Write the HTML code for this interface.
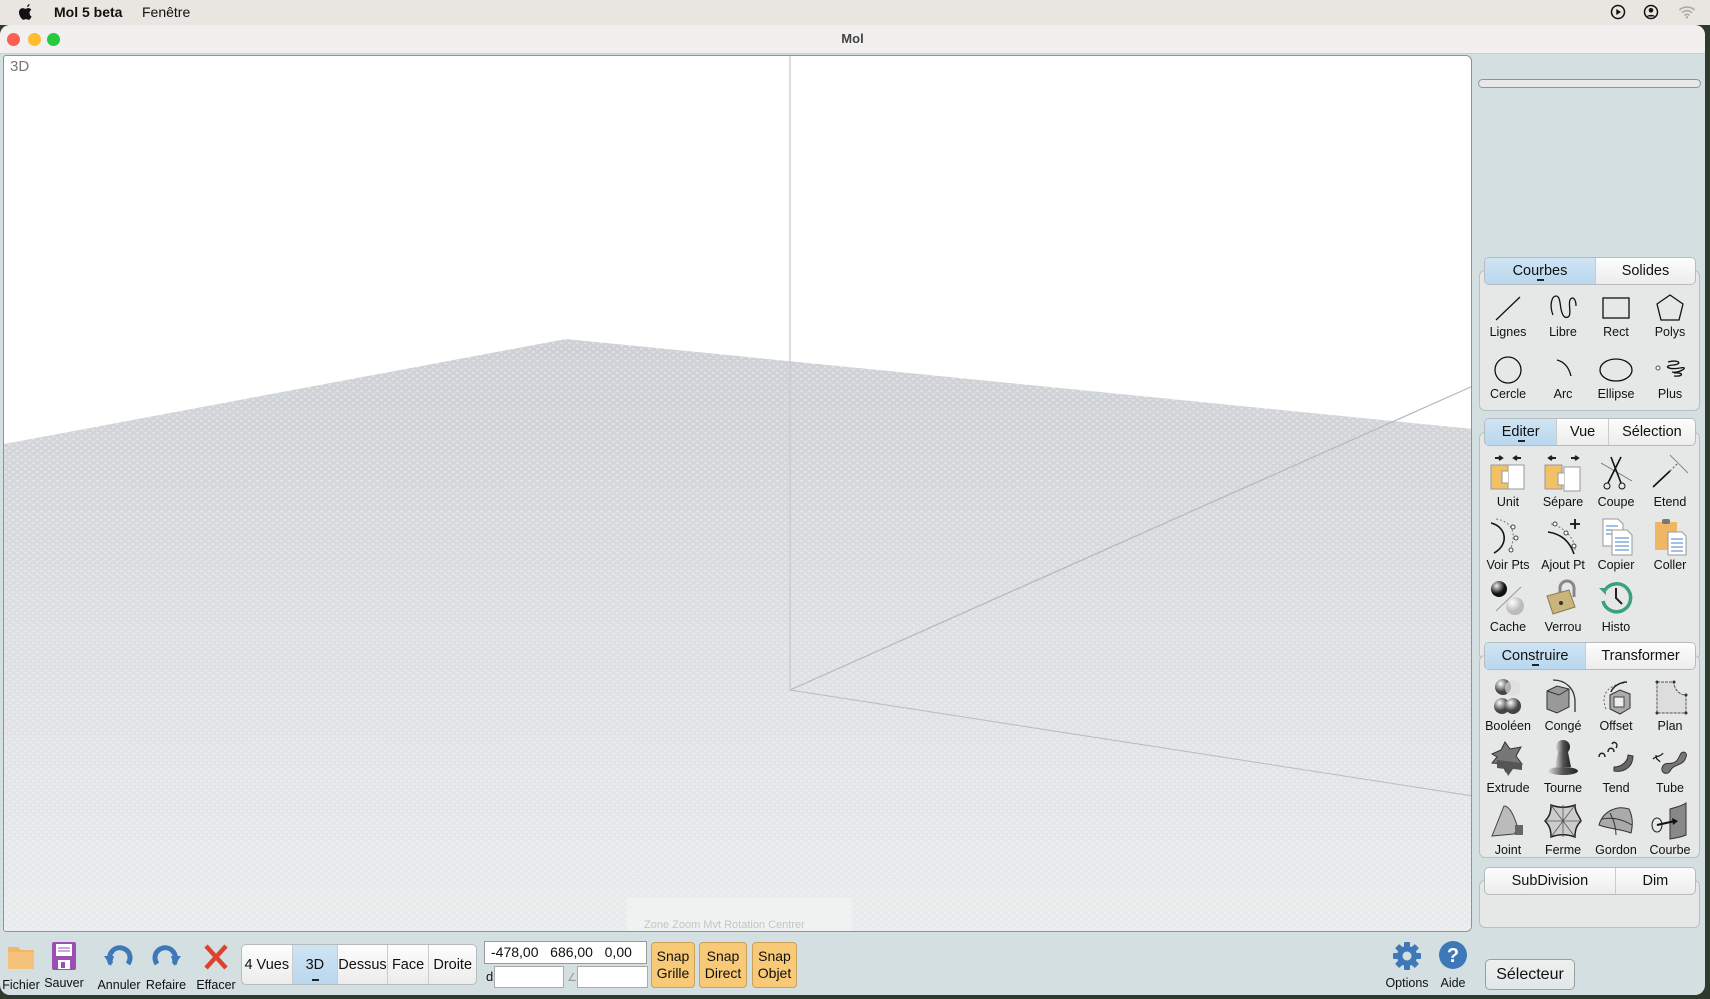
<!DOCTYPE html>
<html><head><meta charset="utf-8"><style>
*{margin:0;padding:0;box-sizing:border-box}
body{width:1710px;height:999px;overflow:hidden;background:#2d3a2c;font-family:"Liberation Sans",sans-serif;position:relative}
.a{position:absolute}
#menu{left:0;top:0;width:1710px;height:25px;background:#e9e5e0;font-size:14px;color:#111}
#win{left:0;top:25px;width:1705px;height:970px;background:#d3dfe0;border-radius:10px 10px 10px 10px;overflow:hidden}
#title{left:0;top:0;width:1705px;height:29px;background:#f1f0ee;border-bottom:1px solid #c9cfd0}
.dot{width:13px;height:13px;border-radius:50%;top:8px}
#vp{left:3px;top:30px;width:1469px;height:877px;background:#fff;border:1px solid #8d9496;border-radius:3px 6px 6px 3px;overflow:hidden}
.tabs{position:absolute;display:flex;border:1px solid #b6bcbd;border-radius:5px;background:linear-gradient(#fdfdfd,#ececec);font-size:14.5px;color:#111;overflow:hidden}
.tabs div{display:flex;align-items:center;justify-content:center;border-left:1px solid #c8cccc;position:relative}
.tabs div:first-child{border-left:none}
.tabs .on{background:linear-gradient(#cfe4f3,#b9d7ee)}
.tabs .on:after{content:"";position:absolute;bottom:3px;left:50%;width:7px;margin-left:-3px;height:2px;background:#222}
.panel{position:absolute;border:1px solid #b8c0c1;border-radius:6px;background:#e6e8e8}
.ic{position:absolute;width:54px;text-align:center;font-size:12.5px;color:#111}
.ic svg{display:block;margin:0 auto 2px}
.bt{position:absolute;text-align:center;font-size:12.5px;color:#111}
.snap{position:absolute;top:917px;height:46px;background:#f8c976;border:1px solid #c9a15a;border-radius:4px;font-size:14px;line-height:17px;text-align:center;padding-top:5px;color:#111}
</style></head><body>
<div id="menu" class="a">
 <svg class="a" style="left:19px;top:4px" width="15" height="17" viewBox="0 0 15 17"><path d="M10.5 0c.2 1.3-.9 2.9-2.3 3-.2-1.3 1-2.8 2.3-3zM12.6 12.5c-.7 1.5-1.6 3.3-2.8 3.3-1.1 0-1.4-.7-2.7-.7s-1.7.7-2.7.7C3.2 15.8 0 12 0 8.5 0 5.600 1.9 4.1 3.7 4.1c1.1 0 2 .7 2.7.7.6 0 1.7-.8 3-.7.5 0 2 .2 2.9 1.6-2.6 1.6-2.1 5.6.3 6.8z" fill="#111"/></svg>
 <span class="a" style="left:54px;top:4px;font-weight:bold">Mol 5 beta</span>
 <span class="a" style="left:142px;top:4px">Fenêtre</span>
 <svg class="a" style="left:1610px;top:4px" width="16" height="16"><circle cx="8" cy="8" r="6.5" fill="none" stroke="#111" stroke-width="1.5"/><path d="M6.3 5v6l4.7-3z" fill="#111"/></svg>
 <svg class="a" style="left:1643px;top:4px" width="16" height="16"><circle cx="8" cy="8" r="6.5" fill="none" stroke="#111" stroke-width="1.5"/><circle cx="8" cy="6.3" r="2.3" fill="#111"/><path d="M3.8 12.5c1-2.2 7.4-2.2 8.4 0" fill="#111"/></svg>
 <svg class="a" style="left:1678px;top:4px" width="18" height="15"><path d="M1.5 6a11 11 0 0 1 15 0M4 8.8a7 7 0 0 1 10 0M6.5 11.4a3.5 3.5 0 0 1 5 0" fill="none" stroke="#aaa" stroke-width="1.6"/><circle cx="9" cy="13.3" r="1.2" fill="#aaa"/></svg>
</div>
<div id="win" class="a">
 <div id="title" class="a">
  <div class="a dot" style="left:7px;background:#fd5f57"></div>
  <div class="a dot" style="left:28px;background:#febc2e"></div>
  <div class="a dot" style="left:47px;background:#28c840"></div>
  <div class="a" style="left:0;width:1705px;top:6px;text-align:center;font-size:13px;font-weight:bold;color:#444">Mol</div>
 </div>
 <div id="vp" class="a">
  <svg width="1469" height="877" style="position:absolute;left:0;top:0">
   <defs>
    <linearGradient id="g" x1="0" y1="0" x2="0" y2="1"><stop offset="0" stop-color="#cdd0d4"/><stop offset="0.45" stop-color="#dcdee1"/><stop offset="1" stop-color="#e9ebec"/></linearGradient>
    <pattern id="p" width="8" height="6" patternUnits="userSpaceOnUse"><path d="M0 2h3M4 5h3" stroke="#fff" stroke-width="1"/></pattern>
   </defs>
   <polygon points="0,388 562,283 1469,373 1469,877 0,877" fill="url(#g)"/>
   <polygon points="0,388 562,283 1469,373 1469,877 0,877" fill="url(#p)" opacity="0.55"/>
   <line x1="786" y1="0" x2="786" y2="634" stroke="#c8cacc" stroke-width="1.3"/>
   <line x1="786" y1="634" x2="1469" y2="330" stroke="#b5b8bb" stroke-width="1.2"/>
   <line x1="786" y1="634" x2="1469" y2="740" stroke="#b9bcbf" stroke-width="1"/>
   <rect x="623" y="842" width="225" height="40" fill="#f2f3f3" opacity="0.7"/>
   <text x="640" y="872" font-size="11" fill="#c2c4c6" font-family="Liberation Sans">Zone  Zoom   Mvt  Rotation Centrer</text>
  </svg>
  <div class="a" style="left:6px;top:2px;font-size:15px;color:#777">3D</div>
 </div>
 <div class="a" style="left:1478px;top:54px;width:223px;height:9px;border:1px solid #8f9596;border-radius:5px;background:#e7e9e9"></div>

 <div class="panel" style="left:1479px;top:245px;width:221px;height:141px"></div>
 <div class="tabs" style="left:1484px;top:232px;width:212px;height:28px"><div class="on" style="width:111px">Courbes</div><div style="width:101px">Solides</div></div>
 <div class="ic" style="left:1481px;top:268px"><svg width="30" height="30"><line x1="3" y1="27" x2="27" y2="4" stroke="#111" stroke-width="1.3"/></svg>Lignes</div>
 <div class="ic" style="left:1536px;top:268px"><svg width="30" height="30"><path d="M5 22C1 12 4 3 8 3s4 8 5 13 3 10 7 8 0-13 2-17 6-2 6 6" fill="none" stroke="#111" stroke-width="1.3"/></svg>Libre</div>
 <div class="ic" style="left:1589px;top:268px"><svg width="30" height="30"><rect x="2" y="5" width="26" height="20" fill="none" stroke="#111" stroke-width="1.3"/></svg>Rect</div>
 <div class="ic" style="left:1643px;top:268px"><svg width="30" height="30"><path d="M15 2L28 11 24 27H6L2 11z" fill="none" stroke="#111" stroke-width="1.3"/></svg>Polys</div>
 <div class="ic" style="left:1481px;top:330px"><svg width="30" height="30"><circle cx="15" cy="15" r="13" fill="none" stroke="#111" stroke-width="1.3"/></svg>Cercle</div>
 <div class="ic" style="left:1536px;top:330px"><svg width="30" height="30"><path d="M9 5c8 2 12 8 14 16" fill="none" stroke="#111" stroke-width="1.3"/></svg>Arc</div>
 <div class="ic" style="left:1589px;top:330px"><svg width="34" height="30"><ellipse cx="17" cy="15" rx="16" ry="11" fill="none" stroke="#111" stroke-width="1.3"/></svg>Ellipse</div>
 <div class="ic" style="left:1643px;top:330px"><svg width="34" height="30"><circle cx="5" cy="13" r="2" fill="#fff" stroke="#555"/><path d="M15 7c10-3 16 2 5 3s-4 5 7 3-2 6-8 4m2 4c10 1 10-4 0-3" fill="none" stroke="#111" stroke-width="1.3"/></svg>Plus</div>

 <div class="panel" style="left:1479px;top:407px;width:221px;height:228px"></div>
 <div class="tabs" style="left:1484px;top:393px;width:212px;height:28px"><div class="on" style="width:72px">Editer</div><div style="width:52px">Vue</div><div style="width:88px">Sélection</div></div>
 <div class="ic" style="left:1481px;top:428px"><svg width="40" height="40"><path d="M7 5h7M11 3l3 2-3 2M33 5h-7M29 3l-3 2 3 2" stroke="#222" stroke-width="2" fill="none"/><rect x="3" y="12" width="17" height="24" fill="#f2c066" stroke="#999"/><rect x="20" y="12" width="16" height="24" fill="#fff" stroke="#999"/><path d="M20 18h-6v12h6" fill="#fff" stroke="#999"/></svg>Unit</div>
 <div class="ic" style="left:1536px;top:428px"><svg width="40" height="40"><path d="M6 5h7M9 3l-3 2 3 2M35 5h-7M32 3l3 2-3 2" stroke="#222" stroke-width="2" fill="none"/><rect x="2" y="12" width="17" height="24" fill="#f2c066" stroke="#999"/><rect x="21" y="14" width="16" height="24" fill="#fff" stroke="#999"/><path d="M21 20h-6v12h6" fill="#fff" stroke="#999"/></svg>Sépare</div>
 <div class="ic" style="left:1589px;top:428px"><svg width="40" height="40"><line x1="5" y1="10" x2="36" y2="28" stroke="#777"/><path d="M25 4L12 30M15 4l10 26" stroke="#111" stroke-width="1.6"/><circle cx="11" cy="33" r="3" fill="none" stroke="#111"/><circle cx="26" cy="33" r="3" fill="none" stroke="#111"/></svg>Coupe</div>
 <div class="ic" style="left:1643px;top:428px"><svg width="40" height="40"><line x1="20" y1="2" x2="38" y2="20" stroke="#888"/><path d="M3 34L20 18" stroke="#111" stroke-width="1.6"/><path d="M20 18l8-8" stroke="#555" stroke-dasharray="2 2"/></svg>Etend</div>
 <div class="ic" style="left:1481px;top:491px"><svg width="40" height="40"><path d="M3 7c16 4 18 22 3 30" fill="none" stroke="#111" stroke-width="1.6"/><path d="M8 3c14 2 22 12 14 31" fill="none" stroke="#777" stroke-dasharray="2 2"/><circle cx="25" cy="11" r="2" fill="#fff" stroke="#444"/><circle cx="28" cy="22" r="2" fill="#fff" stroke="#444"/><circle cx="23" cy="34" r="2" fill="#fff" stroke="#444"/></svg>Voir Pts</div>
 <div class="ic" style="left:1536px;top:491px"><svg width="40" height="40"><path d="M5 16c14 2 22 10 26 22" fill="none" stroke="#111" stroke-width="1.6"/><path d="M8 8c10 2 24 12 24 26" fill="none" stroke="#777" stroke-dasharray="2 2"/><circle cx="12" cy="8" r="2" fill="#fff" stroke="#444"/><circle cx="23" cy="17" r="2" fill="#fff" stroke="#444"/><circle cx="31" cy="30" r="2" fill="#fff" stroke="#444"/><path d="M32 3v10M27 8h10" stroke="#111" stroke-width="1.8"/></svg>Ajout Pt</div>
 <div class="ic" style="left:1589px;top:491px"><svg width="40" height="40"><path d="M7 3h15l5 5v22H7z" fill="#fff" stroke="#999"/><path d="M10 10h12M10 14h12M10 18h12" stroke="#4a7fc8"/><path d="M16 14h15l5 5v20H16z" fill="#fff" stroke="#999"/><path d="M19 22h14M19 26h14M19 30h14M19 34h14" stroke="#4a7fc8"/></svg>Copier</div>
 <div class="ic" style="left:1643px;top:491px"><svg width="40" height="40"><rect x="5" y="6" width="22" height="28" fill="#efb764"/><rect x="12" y="3" width="8" height="5" rx="2" fill="#777"/><path d="M18 16h14l4 4v19H18z" fill="#fff" stroke="#999"/><path d="M21 23h12M21 27h12M21 31h12M21 35h12" stroke="#4a7fc8"/></svg>Coller</div>
 <div class="ic" style="left:1481px;top:553px"><svg width="40" height="40"><defs><radialGradient id="b1" cx=".35" cy=".3"><stop offset="0" stop-color="#eee"/><stop offset="1" stop-color="#111"/></radialGradient><radialGradient id="b2" cx=".35" cy=".3"><stop offset="0" stop-color="#fff"/><stop offset="1" stop-color="#bbb"/></radialGradient></defs><circle cx="11" cy="11" r="8" fill="url(#b1)"/><line x1="8" y1="33" x2="33" y2="9" stroke="#999"/><circle cx="27" cy="28" r="9" fill="url(#b2)"/></svg>Cache</div>
 <div class="ic" style="left:1536px;top:553px"><svg width="40" height="40"><path d="M17 15v-5a7 7 0 0 1 14 0v9" fill="none" stroke="#888" stroke-width="3"/><path d="M4 18l22-6 6 17-22 7z" fill="#c9b47a" stroke="#8a7a50"/><circle cx="18" cy="25" r="2" fill="#333"/></svg>Verrou</div>
 <div class="ic" style="left:1589px;top:553px"><svg width="40" height="40"><path d="M9 12a14 14 0 1 1-2 11" fill="none" stroke="#3aa27a" stroke-width="3.5"/><path d="M3 10l7 0 0 7z" fill="#3aa27a"/><path d="M20 10v10l6 6" stroke="#222" stroke-width="2" fill="none"/></svg>Histo</div>

 <div class="panel" style="left:1479px;top:630px;width:221px;height:203px"></div>
 <div class="tabs" style="left:1484px;top:617px;width:212px;height:28px"><div class="on" style="width:101px">Construire</div><div style="width:111px">Transformer</div></div>
 <div class="ic" style="left:1481px;top:652px"><svg width="40" height="40"><defs><radialGradient id="s" cx=".35" cy=".3"><stop offset="0" stop-color="#fff"/><stop offset="1" stop-color="#444"/></radialGradient></defs><circle cx="15" cy="10" r="8" fill="url(#s)"/><circle cx="25" cy="11" r="8" fill="#ddd" opacity=".7"/><circle cx="14" cy="29" r="8" fill="url(#s)"/><circle cx="25" cy="29" r="8" fill="url(#s)"/></svg>Booléen</div>
 <div class="ic" style="left:1536px;top:652px"><svg width="40" height="40"><path d="M10 3c12 0 22 8 22 22v10" fill="none" stroke="#333" stroke-width="1.3"/><path d="M4 14l10-5 12 3v18l-12 6-10-4z" fill="#999" stroke="#333"/><path d="M4 14l12 4 10-6" fill="none" stroke="#333"/></svg>Congé</div>
 <div class="ic" style="left:1589px;top:652px"><svg width="40" height="40"><path d="M10 32c-6-14 2-24 18-26" fill="none" stroke="#666" stroke-dasharray="2 2"/><path d="M15 15c2-6 10-10 16-10" fill="none" stroke="#222" stroke-width="1.5"/><path d="M14 18l10-5 10 4v14l-10 6-10-5z" fill="#aaa" stroke="#333"/><rect x="18" y="20" width="10" height="10" fill="#eee" stroke="#444"/></svg>Offset</div>
 <div class="ic" style="left:1643px;top:652px"><svg width="40" height="40"><path d="M7 5h17c0 8 6 13 12 13v18H7z" fill="#ddd" stroke="#555" stroke-dasharray="3 1"/><g fill="#333"><circle cx="7" cy="5" r="1.5"/><circle cx="24" cy="5" r="1.5"/><circle cx="36" cy="18" r="1.5"/><circle cx="36" cy="36" r="1.5"/><circle cx="7" cy="36" r="1.5"/></g></svg>Plan</div>
 <div class="ic" style="left:1481px;top:714px"><svg width="40" height="40"><path d="M4 15l9-4 4-8 5 7 11-2-5 9 6 8-10-1-6 9-4-8-10-1 5-6z" fill="#777" stroke="#333"/><path d="M9 21v8l8 1 3 7 5-7 9 1v-7" fill="#555"/></svg>Extrude</div>
 <div class="ic" style="left:1536px;top:714px"><svg width="40" height="40"><defs><linearGradient id="t" x1="0" x2="1"><stop offset="0" stop-color="#ddd"/><stop offset=".5" stop-color="#555"/><stop offset="1" stop-color="#222"/></linearGradient></defs><ellipse cx="20" cy="8" rx="7" ry="7" fill="url(#t)"/><path d="M15 13h10l3 15h-16z" fill="url(#t)"/><ellipse cx="20" cy="32" rx="15" ry="4" fill="url(#t)"/></svg>Tourne</div>
 <div class="ic" style="left:1589px;top:714px"><svg width="40" height="40"><path d="M3 18c0-5 6-5 6 0M12 13c0-5 6-5 6 0M16 5c2-4 7 0 4 4" fill="none" stroke="#222" stroke-width="1.5"/><path d="M18 28c8 0 14-6 14-12l5 1c0 10-8 17-19 15z" fill="#666" stroke="#333"/></svg>Tend</div>
 <div class="ic" style="left:1643px;top:714px"><svg width="40" height="40"><path d="M3 20c4-4 8-2 10-6M6 16c0 6 3 4 4 7" fill="none" stroke="#222" stroke-width="1.3"/><path d="M12 29c3-10 12 2 18-13 2-5 8-3 6 2-3 10-12 6-16 14-2 4-9 3-8-3z" fill="#777" stroke="#333"/></svg>Tube</div>
 <div class="ic" style="left:1481px;top:776px"><svg width="40" height="40"><path d="M4 35L16 5c6 0 10 10 14 22l-4 6z" fill="#bbb" stroke="#444"/><rect x="27" y="24" width="8" height="10" fill="#666"/></svg>Joint</div>
 <div class="ic" style="left:1536px;top:776px"><svg width="40" height="40"><path d="M8 4c8 3 16 3 24 0 0 8 4 10 6 16-4 4-6 8-6 16-8-3-16-3-24 0 0-8-2-12-6-16 4-4 6-8 6-16z" fill="#ccc" stroke="#222" stroke-width="1.5"/><path d="M8 4l24 32M32 4L8 36M2 20h36M20 4v32" stroke="#555" stroke-width=".8"/></svg>Ferme</div>
 <div class="ic" style="left:1589px;top:776px"><svg width="40" height="40"><path d="M3 24c4-14 18-20 30-16 4 8 4 16 2 24-10-4-22-4-32-8z" fill="#aaa" stroke="#333"/><path d="M14 12c4 8 6 14 6 22M6 18c10-2 20 0 30 6" stroke="#333" fill="none"/></svg>Gordon</div>
 <div class="ic" style="left:1643px;top:776px"><svg width="40" height="40"><path d="M20 8c6-2 12-3 16-6v32c-4 2-10 3-16 4z" fill="#888" stroke="#333"/><ellipse cx="7" cy="24" rx="5" ry="7" fill="none" stroke="#222"/><path d="M7 24l18-4" stroke="#111" stroke-width="2"/><path d="M22 17l6 3-5 4z" fill="#111"/></svg>Courbe</div>

 <div class="panel" style="left:1479px;top:855px;width:221px;height:48px"></div>
 <div class="tabs" style="left:1484px;top:842px;width:212px;height:28px"><div style="width:131px">SubDivision</div><div style="width:81px">Dim</div></div>

 <div class="a" style="left:1485px;top:934px;width:90px;height:31px;border:1px solid #9aa0a1;border-radius:5px;background:linear-gradient(#eef0f0,#e2e6e6);font-size:16px;text-align:center;line-height:29px;color:#111">Sélecteur</div>
 <div class="bt" style="left:1383px;top:915px;width:48px"><svg width="32" height="32" viewBox="0 0 32 32"><g fill="#3e78b8"><circle cx="16" cy="16" r="10"/><g id="tt"><rect x="13" y="2" width="6" height="28" rx="1"/></g><use href="#tt" transform="rotate(45 16 16)"/><use href="#tt" transform="rotate(90 16 16)"/><use href="#tt" transform="rotate(135 16 16)"/></g><circle cx="16" cy="16" r="4.5" fill="#d3dfe0"/></svg><div style="margin-top:1px">Options</div></div>
 <div class="bt" style="left:1436px;top:915px;width:34px"><svg width="30" height="30"><circle cx="15" cy="15" r="14" fill="#3e78b8"/><text x="15" y="22" text-anchor="middle" font-size="20" font-weight="bold" fill="#fff" font-family="Liberation Sans">?</text></svg><div style="margin-top:3px">Aide</div></div>

 <div class="bt" style="left:2px;top:917px;width:38px"><svg width="30" height="30"><path d="M2 5h10l3 3h13v19H2z" fill="#f0b864"/><rect x="2" y="10" width="26" height="17" fill="#f4c27a"/></svg><div style="margin-top:3px">Fichier</div></div>
 <div class="bt" style="left:42px;top:915px;width:44px"><svg width="30" height="32"><rect x="3" y="2" width="24" height="28" rx="2" fill="#9b4fb0"/><rect x="7" y="4" width="16" height="12" fill="#fff"/><path d="M9 8h12M9 11h12" stroke="#9b4fb0"/><rect x="9" y="20" width="12" height="9" fill="#fff"/><rect x="12" y="22" width="4" height="6" fill="#9b4fb0"/></svg><div style="margin-top:1px">Sauver</div></div>
 <div class="bt" style="left:94px;top:917px;width:50px"><svg width="34" height="30"><path d="M9 22C4 13 12 4 20 6s10 10 6 16" fill="none" stroke="#3e78b8" stroke-width="5"/><path d="M2 14l10 0-3 10z" fill="#3e78b8"/></svg><div style="margin-top:3px">Annuler</div></div>
 <div class="bt" style="left:142px;top:917px;width:48px"><svg width="34" height="30"><path d="M25 22C30 13 22 4 14 6S4 16 8 22" fill="none" stroke="#3e78b8" stroke-width="5"/><path d="M32 14l-10 0 3 10z" fill="#3e78b8"/></svg><div style="margin-top:3px">Refaire</div></div>
 <div class="bt" style="left:194px;top:917px;width:44px"><svg width="30" height="30"><path d="M5 4l20 22M25 4L5 26" stroke="#e0402e" stroke-width="4.5"/></svg><div style="margin-top:3px">Effacer</div></div>
 <div class="tabs" style="left:241px;top:919px;width:236px;height:41px;font-size:14.5px"><div style="width:50px">4 Vues</div><div class="on" style="width:46px">3D</div><div style="width:50px">Dessus</div><div style="width:42px">Face</div><div style="width:48px">Droite</div></div>
 <div class="a" style="left:484px;top:916px;width:163px;height:23px;background:#fff;border:1px solid #999;font-size:14px;line-height:21px;padding-left:6px;color:#111">-478,00&nbsp;&nbsp;&nbsp;686,00&nbsp;&nbsp;&nbsp;0,00</div>
 <div class="a" style="left:486px;top:944px;font-size:13px;color:#111">d</div>
 <div class="a" style="left:494px;top:941px;width:70px;height:22px;background:#fff;border:1px solid #aaa"></div>
 <div class="a" style="left:567px;top:946px;font-size:11px;color:#999">∠</div>
 <div class="a" style="left:577px;top:941px;width:71px;height:22px;background:#fff;border:1px solid #aaa"></div>
 <div class="snap" style="left:651px;width:44px">Snap<br>Grille</div>
 <div class="snap" style="left:699px;width:48px">Snap<br>Direct</div>
 <div class="snap" style="left:752px;width:45px">Snap<br>Objet</div>
</div>
</body></html>
